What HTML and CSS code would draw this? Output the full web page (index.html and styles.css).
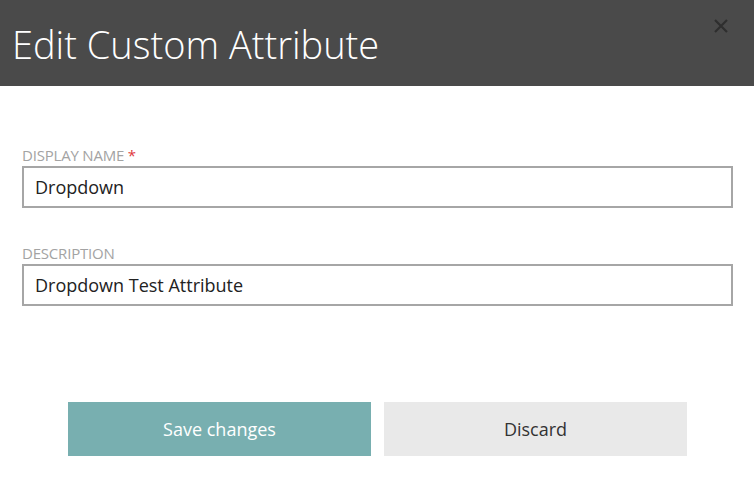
FILE: index.html
```html
<!DOCTYPE html>
<html>
<head>
<meta charset="utf-8">
<link rel="stylesheet" href="styles.css">
</head>
<body>
<div class="dialog">
  <header class="header">
    <h1 class="title">Edit Custom Attribute</h1>
    <button class="close" aria-label="Close">
      <svg width="16" height="16" viewBox="0 0 16 16"><path d="M2 2 L14 14 M14 2 L2 14" stroke="#2e2e2e" stroke-width="2.2" fill="none"/></svg>
    </button>
  </header>
  <main class="body">
    <div class="field">
      <label class="label">DISPLAY NAME <span class="req">*</span></label>
      <div class="input">Dropdown</div>
    </div>
    <div class="field">
      <label class="label">DESCRIPTION</label>
      <div class="input">Dropdown Test Attribute</div>
    </div>
  </main>
  <footer class="actions">
    <button class="btn btn-primary">Save changes</button>
    <button class="btn btn-secondary">Discard</button>
  </footer>
</div>
</body>
</html>
```
FILE: styles.css
```css
html, body {
  margin: 0;
  padding: 0;
  background: #ffffff;
  font-family: "Open Sans", "Noto Sans", sans-serif;
}
.dialog {
  width: 754px;
  height: 477px;
  display: flex;
  flex-direction: column;
}
.header {
  height: 86px;
  background: #4a4a4a;
  display: flex;
  align-items: flex-start;
  justify-content: space-between;
  padding-left: 12px;
  box-sizing: border-box;
}
.title {
  margin: 0;
  margin-top: 18px;
  font-weight: 300;
  font-size: 38px;
  line-height: 52px;
  color: #ffffff;
  letter-spacing: 0;
}
.close {
  background: none;
  border: 0;
  padding: 0;
  margin: 18px 25px 0 0;
  width: 16px;
  height: 16px;
  display: flex;
}
.body {
  padding: 59px 21px 0 22px;
  display: flex;
  flex-direction: column;
  gap: 35px;
}
.field {
  display: flex;
  flex-direction: column;
}
.label {
  font-size: 15px;
  line-height: 21px;
  color: #a3a3a3;
  letter-spacing: -0.2px;
}
.req {
  color: #e0393e;
}
.input {
  height: 38px;
  border: 2px solid #a6a6a6;
  font-size: 18px;
  line-height: 38px;
  padding-left: 11px;
  color: #222222;
}
.actions {
  margin-top: 96px;
  padding-left: 68px;
  display: flex;
  gap: 13px;
}
.btn {
  width: 303px;
  height: 54px;
  border: 0;
  font-family: inherit;
  font-size: 18px;
  padding: 0;
}
.btn-primary {
  background: #78afb0;
  color: #ffffff;
}
.btn-secondary {
  background: #e9e9e9;
  color: #333333;
}
```
